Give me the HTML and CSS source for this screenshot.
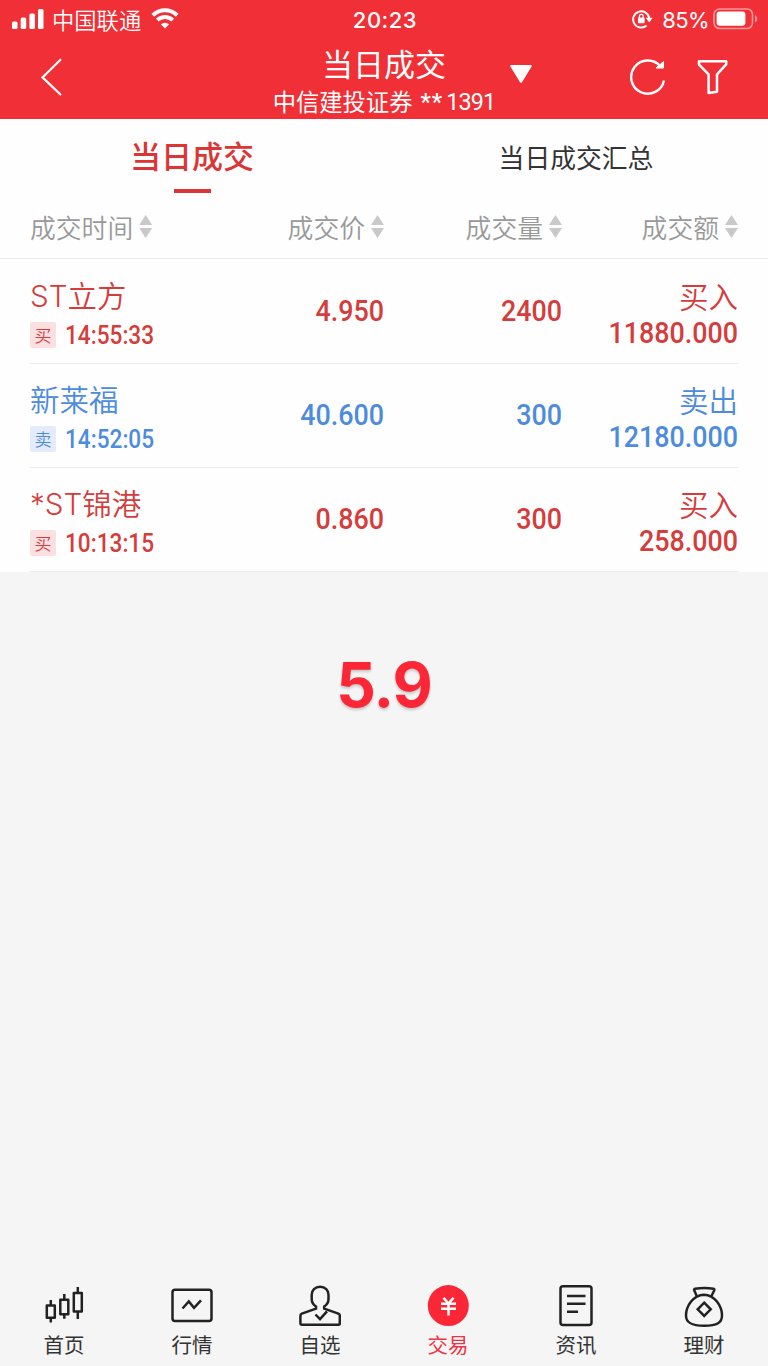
FILE: index.html
```
<!DOCTYPE html>
<html lang="zh-CN">
<head>
    <meta charset="UTF-8">
    <meta name="viewport" content="width=device-width, initial-scale=1.0">
    <title>当日成交</title>
    <link rel="stylesheet" href="styles.css">
</head>
<body>
    <header class="header">
        <div class="status-bar">
            <div class="status-left">
                <svg class="signal" width="32" height="20" viewBox="0 0 32 20" fill="#fff">
                    <rect x="0" y="12.5" width="5.5" height="7.5" rx="1.5"/>
                    <rect x="8.7" y="8.5" width="5.5" height="11.5" rx="1.5"/>
                    <rect x="17.4" y="4.5" width="5.5" height="15.5" rx="1.5"/>
                    <rect x="26" y="0" width="5.5" height="20" rx="1.5"/>
                </svg>
                <span class="carrier">中国联通</span>
                <svg class="wifi" width="28" height="21" viewBox="0 0 28 21">
                    <path d="M1.8 7.2a17.4 17.4 0 0 1 24.4 0" fill="none" stroke="#fff" stroke-width="4"/>
                    <path d="M6.3 12.2a10.9 10.9 0 0 1 15.4 0" fill="none" stroke="#fff" stroke-width="3.8"/>
                    <path d="M9.9 16.3a5.9 5.9 0 0 1 8.2 0L14 20.6z" fill="#fff"/>
                </svg>
            </div>
            <div class="clock">20:23</div>
            <div class="status-right">
                <svg width="21" height="20" viewBox="0 0 21 20">
                    <path d="M14.6 16.5A8.1 8.1 0 1 1 17.2 9" fill="none" stroke="#fff" stroke-width="1.9"/>
                    <path d="M13.7 8.8h7l-3.4 4.8z" fill="#fff"/>
                    <rect x="6" y="8.6" width="6.6" height="5.6" rx=".8" fill="#fff"/>
                    <path d="M7.4 9V7.3a1.9 1.9 0 0 1 3.8 0V9" fill="none" stroke="#fff" stroke-width="1.2"/>
                </svg>
                <span class="percent">85%</span>
                <svg width="45" height="22" viewBox="0 0 45 22">
                    <rect x="1" y="1" width="38.5" height="19.5" rx="5.5" fill="none" stroke="#fff" stroke-opacity=".5" stroke-width="1.6"/>
                    <rect x="3.6" y="3.6" width="28.8" height="14.2" rx="3" fill="#fff"/>
                    <path d="M42 7.3c3 1 3 6 0 7z" fill="#fff" fill-opacity=".5"/>
                </svg>
            </div>
        </div>
        <div class="nav-bar">
            <svg class="back" width="24" height="40" viewBox="0 0 24 40">
                <path d="M21 2.2 2.5 20.4 21 38" fill="none" stroke="#fff" stroke-width="2.2"/>
            </svg>
            <div class="nav-title">
                <h1>当日成交</h1>
                <p>中信建投证券 <span class="stars">**</span><span class="account">1391</span></p>
            </div>
            <svg class="caret" width="24" height="20" viewBox="0 0 24 20">
                <path d="M2 1h20q1.3.2.6 1.4L13 18.2q-1 1.2-2 0L1.4 2.4Q.7 1.2 2 1z" fill="#fff"/>
            </svg>
            <div class="nav-actions">
                <svg width="36" height="38" viewBox="0 0 36 38">
                    <path d="M34 22.5A16.6 16.6 0 1 1 30.500 8.500" fill="none" stroke="#fff" stroke-width="2.4"/>
                    <path d="M26 10h7.500V3.500z" fill="#fff" stroke="#fff" stroke-width="1"/>
                </svg>
                <svg width="32" height="36" viewBox="0 0 32 36">
                    <path d="M2 2.2h27.2v3.2L20 15.4v17.4l-8.4 1.2V15.4L2 5.6z" fill="none" stroke="#fff" stroke-width="2.5" stroke-linejoin="round"/>
                </svg>
            </div>
        </div>
    </header>

    <section class="panel">
        <nav class="tabs">
            <a class="tab active">当日成交</a>
            <a class="tab">当日成交汇总</a>
        </nav>

        <div class="grid columns">
            <div class="column">成交时间<i class="sort"></i></div>
            <div class="column right">成交价<i class="sort"></i></div>
            <div class="column right">成交量<i class="sort"></i></div>
            <div class="column right">成交额<i class="sort"></i></div>
        </div>

        <div class="rows">
            <div class="grid row buy">
                <div class="stock">
                    <div class="name">ST立方</div>
                    <div class="meta"><span class="badge">买</span><span class="time">14:55:33</span></div>
                </div>
                <div class="num">4.950</div>
                <div class="num">2400</div>
                <div class="total">
                    <div class="side">买入</div>
                    <div class="num">11880.000</div>
                </div>
            </div>
            <div class="grid row sell">
                <div class="stock">
                    <div class="name">新莱福</div>
                    <div class="meta"><span class="badge">卖</span><span class="time">14:52:05</span></div>
                </div>
                <div class="num">40.600</div>
                <div class="num">300</div>
                <div class="total">
                    <div class="side">卖出</div>
                    <div class="num">12180.000</div>
                </div>
            </div>
            <div class="grid row buy">
                <div class="stock">
                    <div class="name">*ST锦港</div>
                    <div class="meta"><span class="badge">买</span><span class="time">10:13:15</span></div>
                </div>
                <div class="num">0.860</div>
                <div class="num">300</div>
                <div class="total">
                    <div class="side">买入</div>
                    <div class="num">258.000</div>
                </div>
            </div>
        </div>
    </section>

    <main class="note">5.9</main>

    <footer class="tab-bar">
        <a class="item">
            <svg width="42" height="42" viewBox="0 0 42 42">
                <path d="M3.8 20.5h8v12.3h-8zM17.3 14.8h8v14.4h-8zM30.800 8h8v18.500h-8zM7.800 15v5.500M7.800 32.800V37.500M21.300 9v5.800M21.300 29.200v4.600M34.800 2v6M34.800 26.500v7.500" stroke-linejoin="round"/>
            </svg>
            <span>首页</span>
        </a>
        <a class="item">
            <svg width="42" height="42" viewBox="0 0 42 42">
                <rect x="1.5" y="4.7" width="39" height="31.3" rx="2.5"/>
                <path d="m11.5 23.5 6.3-7 5.2 6.4 7-7.6"/>
            </svg>
            <span>行情</span>
        </a>
        <a class="item">
            <svg width="42" height="42" viewBox="0 0 42 42">
                <path d="M17 21.5v2.200L2.800 28.600Q1.400 29.200 1.400 31v7.600q0 1.200 1.200 1.200h37q1.200 0 1.200-1.200V31q0-1.800-1.400-2.400L25.200 23.700v-2.200q4.300-2.800 4.300-7.500v-4.200c0-4.500-3.200-8-8.400-8s-8.400 3.500-8.400 8V14q0 4.700 4.300 7.500z"/>
                <path d="m16.5 29.5 4.5 4.700 7-7.800"/>
            </svg>
            <span>自选</span>
        </a>
        <a class="item current">
            <svg width="42" height="42" viewBox="0 0 42 42">
                <circle cx="21.3" cy="20.6" r="20.5"/>
                <path d="m16.500 12.800 5 5.700 5-5.700M14 18.700h15M14 23.700h15M21.500 18.500v12"/>
            </svg>
            <span>交易</span>
        </a>
        <a class="item">
            <svg width="42" height="42" viewBox="0 0 42 42">
                <rect x="5.5" y="1.3" width="31" height="38.6" rx="2.5"/>
                <path d="M12 11h18.5M12 18.7h18.5M12 26.8h11"/>
            </svg>
            <span>资讯</span>
        </a>
        <a class="item">
            <svg width="42" height="42" viewBox="0 0 42 42">
                <path d="M13.7 11 11.2 5.2Q10.7 4.1 12 3.8q9.5-1.800 18.500 0 1.300.3.800 1.400L28.500 11"/>
                <path d="M21 9.7C10 10 3 21.5 3 30.5c0 7 5 10.2 18.2 10.2S39 37.5 39 30.5C39 21.5 32 10 21 9.7z"/>
                <path d="m21.2 17.7 6.500 6.600-6.500 6.600-6.500-6.600z"/>
            </svg>
            <span>理财</span>
        </a>
    </footer>
</body>
</html>
```
FILE: styles.css
```
* {
    box-sizing: border-box;
}
body {
    margin: 0;
    height: 1366px;
    display: flex;
    flex-direction: column;
    background: #f5f5f5;
    font-family: "Noto Sans CJK SC", sans-serif;
    overflow: hidden;
}
svg {
    display: block;
    flex: none;
}

/* header */
.header {
    height: 119px;
    background: #f03036;
    color: #fff;
}
.status-bar {
    display: grid;
    grid-template-columns: 1fr auto 1fr;
    align-items: center;
    height: 38px;
    padding: 0 10px 0 12px;
}
.status-left, .status-right {
    display: flex;
    align-items: center;
}
.status-right {
    justify-content: flex-end;
}
.carrier {
    margin: 0 10px 0 8px;
    font-size: 22.3px;
    font-weight: 350;
    line-height: 38px;
}
.wifi {
    margin-top: -1px;
}
.clock {
    margin-top: 1px;
    font-family: Inter, sans-serif;
    font-size: 22px;
    font-weight: 500;
    letter-spacing: 0.5px;
}
.percent {
    margin: 1px 4px 0 9px;
    font-family: Inter, sans-serif;
    font-size: 22px;
    letter-spacing: -0.6px;
}
.nav-bar {
    display: grid;
    grid-template-columns: 234px 220px 46px 1fr;
    align-items: center;
    height: 80px;
    padding: 0 39px 0 40px;
}
.back {
    margin-top: -3px;
}
.nav-title {
    text-align: center;
    white-space: nowrap;
}
.nav-title h1 {
    margin: 2px 0 0;
    font-size: 31px;
    font-weight: 400;
    line-height: 44px;
}
.nav-title p {
    display: flex;
    justify-content: center;
    margin: 0;
    font-size: 23.3px;
    font-weight: 400;
    line-height: 32px;
}
.stars {
    margin: 1px 3px 0 8px;
    font-family: Roboto, sans-serif;
    font-weight: 500;
    letter-spacing: 1px;
}
.account {
    margin-top: 1px;
    font-family: Roboto, sans-serif;
    font-weight: 400;
    letter-spacing: -0.8px;
}
.caret {
    margin: -8px 0 0 15px;
}
.nav-actions {
    display: flex;
    align-items: center;
    justify-content: flex-end;
    gap: 31px;
    margin-top: -2px;
}

/* tabs */
.panel {
    background: #fefefe;
}
.tabs {
    display: flex;
    height: 78px;
}
.tab {
    flex: 1;
    display: flex;
    flex-direction: column;
    align-items: center;
    color: #333;
    font-size: 25.8px;
    line-height: 75px;
}
.tab.active {
    color: #dc3535;
    font-size: 31px;
    font-weight: 500;
    line-height: 72px;
}
.tab.active::after {
    content: "";
    width: 37px;
    height: 4px;
    margin-top: -2px;
    background: #dc3535;
}

/* deals table */
.grid {
    display: grid;
    grid-template-columns: 176px 178px 178px 176px;
    align-items: center;
}
.columns {
    height: 62px;
    padding: 0 30px 2px;
    border-bottom: 1px solid #ebebeb;
    color: #999;
    font-size: 25.8px;
    font-weight: 350;
}
.column {
    display: flex;
    align-items: center;
    gap: 6px;
}
.column.right {
    justify-content: flex-end;
}
.sort {
    width: 13px;
    height: 23px;
    background: #c9c9cb;
    clip-path: polygon(50% 0, 100% 43%, 0 43%, 0 57%, 100% 57%, 50% 100%, 0 57%, 0 43%);
}
.rows {
    padding: 1px 30px 0;
}
.row {
    height: 104px;
    border-bottom: 1px solid #efefef;
}
.buy {
    color: #d53c3c;
}
.sell {
    color: #4d8bdc;
}
.name, .side {
    font-size: 29.5px;
    font-weight: 350;
    line-height: 38px;
}
.name {
    font-family: Inter, "Noto Sans CJK SC", sans-serif;
}
.stock {
    padding-top: 8px;
}
.meta {
    display: flex;
    align-items: center;
    height: 40px;
}
.badge {
    width: 26px;
    height: 26px;
    margin-right: 9px;
    background: #fcdfe1;
    border-radius: 2px;
    font-size: 17px;
    font-weight: 350;
    line-height: 25px;
    text-align: center;
}
.sell .badge {
    background: #e3ebfc;
}
.time, .num {
    font-family: Roboto, sans-serif;
    font-weight: 500;
}
.time {
    font-size: 26px;
    transform: scaleX(0.87);
    transform-origin: left;
}
.num {
    font-size: 29.5px;
    line-height: 38px;
    text-align: right;
    transform: scaleX(0.91);
    transform-origin: right;
}
.row > .num {
    margin-top: -2px;
}
.total {
    padding-top: 4px;
    text-align: right;
}

.note {
    flex: 1;
    padding-top: 75px;
    color: #fc2736;
    font-family: Inter, sans-serif;
    font-size: 62px;
    font-weight: 700;
    letter-spacing: -1px;
    text-align: center;
    text-shadow: 0 2px 3px rgba(0, 0, 0, 0.2);
}

/* bottom bar */
.tab-bar {
    display: flex;
    height: 81px;
}
.item {
    flex: 1;
    display: flex;
    flex-direction: column;
    align-items: center;
    color: #333;
    font-size: 20.5px;
    line-height: 34px;
}
.item svg {
    fill: none;
    stroke: #222;
    stroke-width: 2.5;
}
.item.current {
    color: #ee3344;
}
.item.current circle {
    fill: #fc2736;
    stroke: none;
}
.item.current path {
    stroke: #fff;
}
```
